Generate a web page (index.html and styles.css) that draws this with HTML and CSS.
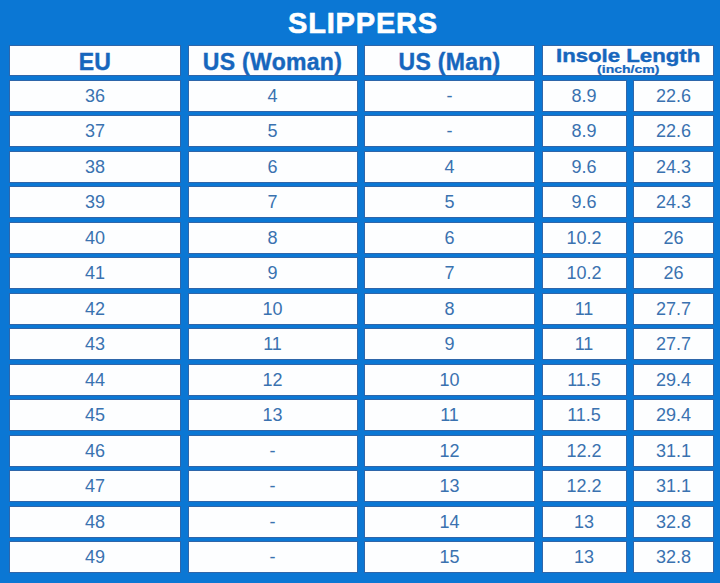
FILE: index.html
```html
<!DOCTYPE html>
<html>
<head>
<meta charset="utf-8">
<link rel="stylesheet" href="styles.css">
</head>
<body>
<div class="chart">
  <div class="title">SLIPPERS</div>
  <div class="grid">
    <div class="cell head">EU</div>
    <div class="cell head">US (Woman)</div>
    <div class="cell head">US (Man)</div>
    <div class="cell head span2"><span class="insole">Insole Length</span><span class="unit">(inch/cm)</span></div>

    <div class="cell">36</div><div class="cell">4</div><div class="cell">-</div><div class="cell">8.9</div><div class="cell">22.6</div>
    <div class="cell">37</div><div class="cell">5</div><div class="cell">-</div><div class="cell">8.9</div><div class="cell">22.6</div>
    <div class="cell">38</div><div class="cell">6</div><div class="cell">4</div><div class="cell">9.6</div><div class="cell">24.3</div>
    <div class="cell">39</div><div class="cell">7</div><div class="cell">5</div><div class="cell">9.6</div><div class="cell">24.3</div>
    <div class="cell">40</div><div class="cell">8</div><div class="cell">6</div><div class="cell">10.2</div><div class="cell">26</div>
    <div class="cell">41</div><div class="cell">9</div><div class="cell">7</div><div class="cell">10.2</div><div class="cell">26</div>
    <div class="cell">42</div><div class="cell">10</div><div class="cell">8</div><div class="cell">11</div><div class="cell">27.7</div>
    <div class="cell">43</div><div class="cell">11</div><div class="cell">9</div><div class="cell">11</div><div class="cell">27.7</div>
    <div class="cell">44</div><div class="cell">12</div><div class="cell">10</div><div class="cell">11.5</div><div class="cell">29.4</div>
    <div class="cell">45</div><div class="cell">13</div><div class="cell">11</div><div class="cell">11.5</div><div class="cell">29.4</div>
    <div class="cell">46</div><div class="cell">-</div><div class="cell">12</div><div class="cell">12.2</div><div class="cell">31.1</div>
    <div class="cell">47</div><div class="cell">-</div><div class="cell">13</div><div class="cell">12.2</div><div class="cell">31.1</div>
    <div class="cell">48</div><div class="cell">-</div><div class="cell">14</div><div class="cell">13</div><div class="cell">32.8</div>
    <div class="cell">49</div><div class="cell">-</div><div class="cell">15</div><div class="cell">13</div><div class="cell">32.8</div>
  </div>
</div>
</body>
</html>
```

FILE: styles.css
```css
html, body {
  margin: 0;
  padding: 0;
}
body {
  background: #0b77d4;
  font-family: "Liberation Sans", Arial, sans-serif;
}
.chart {
  width: 720px;
  height: 583px;
  box-sizing: border-box;
  padding: 0 6px 0 9px;
  background: #0b77d4;
  overflow: hidden;
}
.title {
  height: 45px;
  line-height: 46px;
  text-align: center;
  color: #ffffff;
  font-weight: bold;
  font-size: 29px;
  letter-spacing: 0.8px;
  padding-left: 3px;
  -webkit-text-stroke: 0.6px #ffffff;
}
.grid {
  display: grid;
  grid-template-columns: 172px 170px 171px 85px 81px;
  grid-template-rows: 31px repeat(14, 32px);
  column-gap: 6.5px;
  row-gap: 3.5px;
}
.cell {
  box-sizing: border-box;
  background: #fdfeff;
  border: 1px solid #2f66aa;
  display: flex;
  align-items: center;
  justify-content: center;
  color: #3a72b0;
  font-size: 18px;
  padding-top: 1px;
}
.head {
  color: #1666bd;
  font-weight: bold;
  font-size: 23px;
  letter-spacing: 0.3px;
  padding-top: 3px;
  -webkit-text-stroke: 0.4px #1666bd;
}
.span2 {
  grid-column: span 2;
  flex-direction: column;
  padding-top: 0;
  justify-content: flex-start;
}
.insole {
  display: block;
  font-size: 18.5px;
  line-height: 17px;
  margin-top: 1px;
  letter-spacing: 0;
  transform: scaleX(1.2);
}
.unit {
  display: block;
  font-size: 10px;
  line-height: 10px;
  margin-top: 1px;
  letter-spacing: 0;
  transform: scaleX(1.4);
  -webkit-text-stroke: 0.2px #1666bd;
}
```
